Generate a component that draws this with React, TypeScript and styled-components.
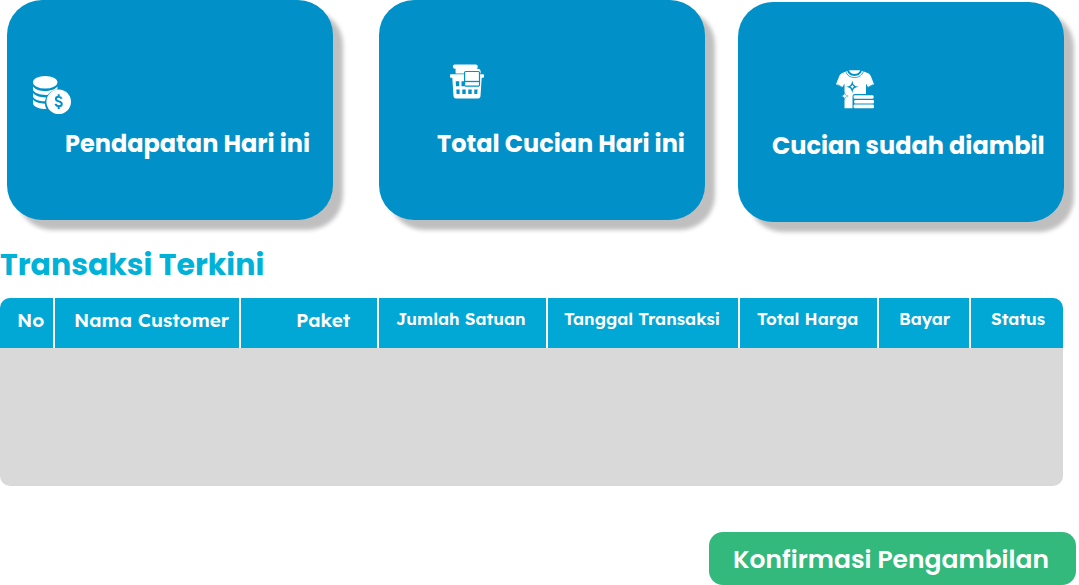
import React from "react";
import styled, { createGlobalStyle } from "styled-components";

const GlobalStyle = createGlobalStyle`
  *, *::before, *::after { box-sizing: border-box; }
  body {
    margin: 0;
    background: #ffffff;
    font-family: Poppins, Inter, "Open Sans", sans-serif;
  }
`;

const Page = styled.main`
  display: flex;
  flex-direction: column;
`;

const Cards = styled.section`
  display: flex;
  align-items: flex-start;
  padding: 0 15px 0 7px;
`;

const Card = styled.article<{ $gap?: number; $drop?: number; $iconTop: number }>`
  flex: 1 1 0;
  min-width: 0;
  height: 220px;
  margin-left: ${(p) => p.$gap ?? 0}px;
  margin-top: ${(p) => p.$drop ?? 0}px;
  padding-top: ${(p) => p.$iconTop}px;
  border-radius: 35px;
  background: #0191c8;
  box-shadow: 10px 10px 4px rgba(0, 0, 0, 0.25);
  color: #ffffff;
`;

const IconSlot = styled.div<{ $left: number; $height: number }>`
  height: ${(p) => p.$height}px;
  padding-left: ${(p) => p.$left}px;

  svg { display: block; }
`;

const CardTitle = styled.h2<{ $left: number }>`
  margin: 0;
  padding-left: ${(p) => p.$left}px;
  font-size: 24px;
  line-height: 36px;
  font-weight: 700;
  white-space: nowrap;
`;

const Heading = styled.h1`
  margin: 24px 0 14px;
  color: #00b1d8;
  font-size: 30px;
  line-height: 38px;
  font-weight: 700;
`;

const TableFrame = styled.div`
  margin-right: 16px;
  border-radius: 10px;
  overflow: hidden;
  background: #d9d9d9;
`;

const Table = styled.table`
  width: 100%;
  table-layout: fixed;
  border-collapse: separate;
  border-spacing: 0;
`;

const HeaderCell = styled.th<{ $left: number; $large?: boolean }>`
  height: 50px;
  padding: ${(p) => (p.$large ? 10 : 9)}px 0 0 ${(p) => p.$left}px;
  background: #02a8d5;
  color: #ffffff;
  font-family: Lexend, Inter, "Open Sans", sans-serif;
  font-size: ${(p) => (p.$large ? 19 : 17)}px;
  line-height: 24px;
  font-weight: 600;
  text-align: left;
  vertical-align: top;
  white-space: nowrap;

  &:not(:last-child) { border-right: 2px solid #ffffff; }
`;

const EmptyCell = styled.td`
  height: 138px;
  padding: 0;
`;

const Actions = styled.div`
  display: flex;
  justify-content: flex-end;
  margin-top: 46px;
  padding-right: 3px;
`;

const ConfirmButton = styled.button`
  height: 53px;
  padding: 2px 27px 0 24px;
  border: 0;
  border-radius: 14px;
  background: #33b97c;
  color: #ffffff;
  font-family: inherit;
  font-size: 25px;
  line-height: 39px;
  font-weight: 600;
  white-space: nowrap;
  cursor: pointer;
`;

const CoinsIcon = () => (
  <svg width="40" height="40" viewBox="0 0 40 40" fill="#fff" aria-hidden="true">
    <ellipse cx="13.2" cy="7.2" rx="12.2" ry="6.3" />
    <path d="M1 11.5c2 3 7 4.6 12.2 4.6 5 0 9.900-1.500 12.200-4.500v2.900c-4.200.5-7.600 2.500-9.900 5.400-6.700.4-13-1.600-14.500-4.900z" />
    <path d="M1 18c2 2.800 7 4.500 13.200 4.400-.7 1.200-1 2.500-1.200 3.900C7 26.300 1.600 24.400 1 21.500z" />
    <path d="M1 24.600c2 2.500 6.500 4.100 11.900 4.200.1 1.900.6 3.700 1.500 5.300C7.500 34.100 1.500 31.900 1 28.500z" />
    <circle cx="26.700" cy="26.700" r="12.300" />
    <path d="M29.600 23.700c-.4-1.300-1.400-1.900-2.900-1.900-1.700 0-2.800.8-2.800 2.100 0 3.300 5.900 1.700 5.900 5 0 1.500-1.200 2.300-3 2.300-1.800 0-2.900-.7-3.200-2.300M26.700 19.200v2.600M26.700 31.200v2.800" fill="none" stroke="#0191c8" strokeWidth="2" />
  </svg>
);

const BasketIcon = () => (
  <svg width="34" height="35" viewBox="0 0 34 35" fill="#fff" aria-hidden="true">
    <path d="M4.800.5h21c2.400 0 2.600 3.800.6 4.200h1.600c1.500 0 2.600.9 2.600 2.400V9.500H5.600V7.500c0-1.200-.5-2.800.8-2.800H4.800C2.300 4.700 2.300.5 4.800.5z" />
    <path fillRule="evenodd" d="M.8 10.200h32.400c.5 0 .8.300.8.800v2c0 .5-.3.800-.8.800h-1.500l-1.200 18.300c-.1 1.500-1 2.400-2.400 2.400H5.900c-1.400 0-2.300-.9-2.400-2.400L2.300 13.800H.8c-.5 0-.8-.3-.8-.8v-2c0-.5.3-.8.8-.8zM5.700 17.300l.3 4.900h3.300v-4.900zM11.500 17.300v4.900h3v-4.900zM6.300 25.500l.3 4.600h3v-4.600zM12.300 25.500v4.600h3.400v-4.600zM18.300 25.500v4.600h3.400v-4.600zM24.300 25.500v4.600h2.900l.4-4.600z" />
    <rect x="14.600" y="7.500" width="14.900" height="14.700" rx="1.200" stroke="#0191c8" strokeWidth="1.200" />
    <path d="M14.600 17.500h14.900" stroke="#0191c8" strokeWidth="1.300" />
  </svg>
);

const ShirtIcon = () => (
  <svg width="40" height="40" viewBox="0 0 40 40" fill="#fff" aria-hidden="true">
    <path d="M12.200.8c.7 3.300 3.600 5.200 7.300 5.200s6.600-1.900 7.300-5.200l5.800 2.100c1.700.7 2.500 1.800 3.200 3.200L39 14.200l-5.800 3.300-2.200-4V24H20c-1.800 0-2.500 1.300-2.500 3v11.300H9.500V29l1.500-3-1.500-3v-9.500l-2.200 4L1 14.200 4.300 6c.7-1.600 1.600-2.500 3.200-3.100z" />
    <path d="M14 .3h11.200c-.7 2.400-2.700 3.600-5.600 3.600S14.700 2.700 14 .3z" />
    <path d="M8.300 17.800 2.600 14.600M32.200 17.800l5.700-3.200M10.800 1.200c1 4.100 4.300 6.300 8.800 6.300s7.800-2.200 8.800-6.300" fill="none" stroke="#0191c8" strokeWidth=".8" />
    <path d="M17.300 10.300c.7 4.600 2 5.900 6.500 6.500-4.500.7-5.800 2-6.500 6.500-.7-4.500-2-5.800-6.500-6.500 4.500-.6 5.800-1.900 6.500-6.500z" fill="#0191c8" />
    <path d="M17.300 14.600c.4 1.500.8 1.900 2.200 2.200-1.400.3-1.800.7-2.200 2.200-.4-1.500-.8-1.900-2.200-2.200 1.400-.3 1.800-.7 2.200-2.200z" />
    <path d="M9.600 22.400c.5 2.500 1.100 3.100 3.600 3.600-2.500.5-3.100 1.100-3.600 3.600-.5-2.500-1.100-3.100-3.600-3.600 2.500-.5 3.100-1.100 3.600-3.600z" stroke="#0191c8" strokeWidth=".5" />
    <rect x="18.600" y="25.200" width="20" height="3.600" rx="1.200" />
    <rect x="19.200" y="29.900" width="19.800" height="3.600" rx="1.200" />
    <rect x="18.600" y="34.600" width="20.400" height="3.700" rx="1.200" />
  </svg>
);

const columns = [
  { label: "No", width: 55, left: 17, large: true },
  { label: "Nama Customer", width: 186, left: 19, large: true },
  { label: "Paket", width: 138, left: 55, large: true },
  { label: "Jumlah Satuan", width: 169, left: 17 },
  { label: "Tanggal Transaksi", width: 192, left: 16 },
  { label: "Total Harga", width: 139, left: 17 },
  { label: "Bayar", width: 92, left: 20 },
  { label: "Status", width: 92, left: 20 },
];

export default function App() {
  return (
    <>
      <GlobalStyle />
      <Page>
        <Cards>
          <Card $iconTop={75}>
            <IconSlot $left={25} $height={51}><CoinsIcon /></IconSlot>
            <CardTitle $left={58}>Pendapatan Hari ini</CardTitle>
          </Card>
          <Card $gap={46} $iconTop={64}>
            <IconSlot $left={71} $height={62}><BasketIcon /></IconSlot>
            <CardTitle $left={58}>Total Cucian Hari ini</CardTitle>
          </Card>
          <Card $gap={33} $drop={2} $iconTop={68}>
            <IconSlot $left={97} $height={58}><ShirtIcon /></IconSlot>
            <CardTitle $left={34}>Cucian sudah diambil</CardTitle>
          </Card>
        </Cards>
        <Heading>Transaksi Terkini</Heading>
        <TableFrame>
          <Table>
            <colgroup>
              {columns.map((c) => <col key={c.label} width={c.width} />)}
            </colgroup>
            <thead>
              <tr>
                {columns.map((c) => (
                  <HeaderCell key={c.label} scope="col" $left={c.left} $large={c.large}>
                    {c.label}
                  </HeaderCell>
                ))}
              </tr>
            </thead>
            <tbody>
              <tr><EmptyCell colSpan={columns.length} /></tr>
            </tbody>
          </Table>
        </TableFrame>
        <Actions>
          <ConfirmButton type="button">Konfirmasi Pengambilan</ConfirmButton>
        </Actions>
      </Page>
    </>
  );
}
